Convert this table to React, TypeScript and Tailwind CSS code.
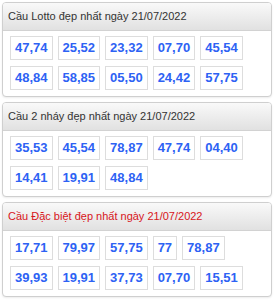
import React from "react";

const cards = [
  {
    title: "Cầu Lotto đẹp nhất ngày 21/07/2022",
    red: false,
    nums: ["47,74", "25,52", "23,32", "07,70", "45,54", "48,84", "58,85", "05,50", "24,42", "57,75"],
  },
  {
    title: "Cầu 2 nháy đẹp nhất ngày 21/07/2022",
    red: false,
    nums: ["35,53", "45,54", "78,87", "47,74", "04,40", "14,41", "19,91", "48,84"],
  },
  {
    title: "Cầu Đặc biệt đẹp nhất ngày 21/07/2022",
    red: true,
    nums: ["17,71", "79,97", "57,75", "77", "78,87", "39,93", "19,91", "37,73", "07,70", "15,51"],
  },
];

const App = () => {
  return (
    <div
      className="w-[276px] min-h-[300px] bg-white pt-[2px] pl-[2px] pr-[4px] flex flex-col gap-[5px]"
      style={{ fontFamily: '"Liberation Sans", Arial, sans-serif' }}
    >
      {cards.map((card) => (
        <div
          key={card.title}
          className="border border-[#cfcfcf] rounded-[4px] bg-white shadow-[0_1px_2px_rgba(0,0,0,0.08)] overflow-hidden"
        >
          <div
            className={`h-[28px] flex items-center px-[5px] text-[11px] bg-gradient-to-b from-[#f9f9f9] to-[#e1e1e1] border-b border-[#d2d2d2] ${
              card.red ? "text-[#d8151b]" : "text-[#333333]"
            }`}
          >
            {card.title}
          </div>
          <div className="flex flex-wrap gap-x-[5px] gap-y-[6px] pt-[5px] pb-[6px] px-[7px]">
            {card.nums.map((n, i) => (
              <span
                key={i}
                className="border border-[#dddddd] bg-white px-[4px] py-[3px] text-[13px] leading-[16px] font-bold text-[#2d62f4]"
              >
                {n}
              </span>
            ))}
          </div>
        </div>
      ))}
    </div>
  );
};

export default App;
